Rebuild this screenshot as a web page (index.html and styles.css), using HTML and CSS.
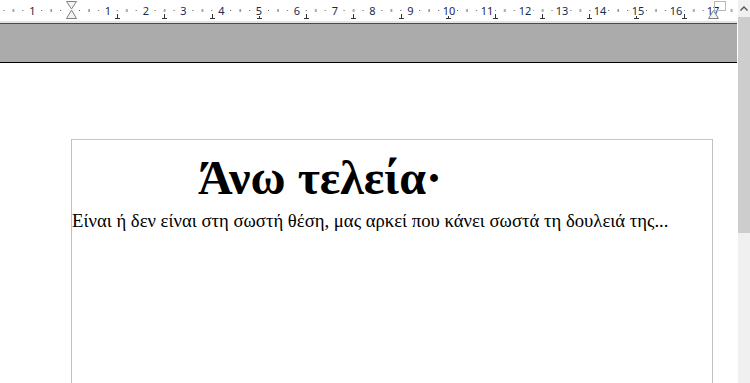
FILE: index.html
```html
<!DOCTYPE html>
<html lang="el">
<head>
<meta charset="utf-8">
<title>Άνω τελεία</title>
<link rel="stylesheet" href="styles.css">
</head>
<body>
<div class="window">
  <div class="main">
    <div class="ruler">
      <svg class="ruler-svg" width="737" height="21" viewBox="0 0 737 21" xmlns="http://www.w3.org/2000/svg">
        <defs>
          <pattern id="cm" x="-5.6" y="0" width="37.8" height="21" patternUnits="userSpaceOnUse">
            <rect x="9" y="10" width="1" height="1" fill="#555"/>
            <rect x="18.5" y="9" width="1" height="3" fill="#555"/>
            <rect x="28" y="10" width="1" height="1" fill="#555"/>
          </pattern>
        </defs>
        <rect x="0" y="0" width="737" height="21" fill="url(#cm)"/>
        <g class="tabs" stroke="#333" stroke-width="1" fill="none">
          <path d="M117.5 14v5M115 18.5h5"/>
          <path d="M164.5 14v5M162 18.5h5"/>
          <path d="M212.5 14v5M210 18.5h5"/>
          <path d="M259.5 14v5M257 18.5h5"/>
          <path d="M306.5 14v5M304 18.5h5"/>
          <path d="M353.5 14v5M351 18.5h5"/>
          <path d="M401.5 14v5M399 18.5h5"/>
          <path d="M448.5 14v5M446 18.5h5"/>
          <path d="M495.5 14v5M493 18.5h5"/>
          <path d="M542.5 14v5M540 18.5h5"/>
          <path d="M589.5 14v5M587 18.5h5"/>
          <path d="M636.5 14v5M634 18.5h5"/>
          <path d="M684.5 14v5M682 18.5h5"/>
        </g>
        <g class="nums" text-anchor="middle">
          <rect x="28" y="4" width="9" height="12" fill="#fff"/>
          <text x="32.5" y="15">1</text>
          <rect x="103" y="4" width="10" height="12" fill="#fff"/>
          <text x="108" y="15">1</text>
          <rect x="141" y="4" width="10" height="12" fill="#fff"/>
          <text x="146" y="15">2</text>
          <rect x="178" y="4" width="10" height="12" fill="#fff"/>
          <text x="183.5" y="15">3</text>
          <rect x="216" y="4" width="10" height="12" fill="#fff"/>
          <text x="221.5" y="15">4</text>
          <rect x="254" y="4" width="10" height="12" fill="#fff"/>
          <text x="259" y="15">5</text>
          <rect x="292" y="4" width="10" height="12" fill="#fff"/>
          <text x="297" y="15">6</text>
          <rect x="330" y="4" width="10" height="12" fill="#fff"/>
          <text x="335" y="15">7</text>
          <rect x="367" y="4" width="10" height="12" fill="#fff"/>
          <text x="372.5" y="15">8</text>
          <rect x="405" y="4" width="10" height="12" fill="#fff"/>
          <text x="410.5" y="15">9</text>
          <rect x="441" y="4" width="16" height="12" fill="#fff"/>
          <text x="449" y="15">10</text>
          <rect x="479" y="4" width="16" height="12" fill="#fff"/>
          <text x="487" y="15">11</text>
          <rect x="517" y="4" width="16" height="12" fill="#fff"/>
          <text x="525" y="15">12</text>
          <rect x="554" y="4" width="16" height="12" fill="#fff"/>
          <text x="562" y="15">13</text>
          <rect x="592" y="4" width="16" height="12" fill="#fff"/>
          <text x="600" y="15">14</text>
          <rect x="630" y="4" width="16" height="12" fill="#fff"/>
          <text x="638" y="15">15</text>
          <rect x="668" y="4" width="16" height="12" fill="#fff"/>
          <text x="676" y="15">16</text>
          <rect x="705" y="4" width="16" height="12" fill="#fff"/>
          <text x="713" y="15">17</text>
        </g>
        <g class="markers" stroke="#808080" stroke-width="1" fill="#f4f4f4">
          <path d="M66.5 1.5h10l-5 7.5z"/>
          <path d="M71.5 10l5 8.5h-10z"/>
          <rect x="714.5" y="1.5" width="11" height="9" fill="none" stroke="#b8b8b8"/>
          <path d="M713.5 10.5l5 8h-10z"/>
        </g>
      </svg>
    </div>
    <div class="band"></div>
    <div class="doc">
      <div class="page">
        <h1 class="title">Άνω τελεία·</h1>
        <p class="body-text">Είναι ή δεν είναι στη σωστή θέση, μας αρκεί που κάνει σωστά τη δουλειά της...</p>
      </div>
    </div>
  </div>
  <div class="scrollbar">
    <div class="arrow">
      <svg width="12" height="17" viewBox="0 0 12 17" xmlns="http://www.w3.org/2000/svg">
        <path d="M2.5 10.5l3.5-3.5 3.5 3.5" fill="none" stroke="#555" stroke-width="1.4"/>
      </svg>
    </div>
    <div class="thumb"></div>
    <div class="track"></div>
  </div>
</div>
</body>
</html>
```

FILE: styles.css
```css
html, body {
  margin: 0;
  padding: 0;
  width: 750px;
  height: 383px;
  overflow: hidden;
  background: #fff;
}

.window {
  display: flex;
  width: 750px;
  height: 383px;
}

.main {
  width: 737px;
  display: flex;
  flex-direction: column;
  margin-right: 1px;
}

.ruler {
  height: 21px;
  background: #fff;
  border-bottom: 2px solid #e4e4e4;
  position: relative;
}

.ruler-svg {
  display: block;
}

.nums text {
  font-family: "Noto Sans", "Liberation Sans", sans-serif;
  font-size: 11px;
  fill: #1c2a4a;
}

.band {
  height: 38px;
  background: #ababab;
  border-top: 1px solid #4a4a4a;
  border-bottom: 1px solid #000;
}

.doc {
  flex: 1;
  background: #fff;
  padding-top: 76px;
  padding-left: 71px;
  overflow: hidden;
}

.page {
  width: 642px;
  height: 400px;
  border-top: 1px solid #c6c6c6;
  border-left: 1px solid #c0c0c0;
  border-right: 1px solid #c0c0c0;
  box-sizing: border-box;
  font-family: "Liberation Serif", "DejaVu Serif", serif;
  color: #000;
}

.title {
  margin: 0;
  padding: 10px 0 0 126px;
  font-size: 48px;
  line-height: 55px;
  font-weight: bold;
}

.body-text {
  margin: 5px 0 0 0;
  font-size: 18.7px;
  line-height: 22px;
  white-space: nowrap;
}

.scrollbar {
  width: 12px;
  display: flex;
  flex-direction: column;
  background: #f0f0f0;
}

.arrow {
  height: 17px;
  background: #f0f0f0;
}

.arrow svg {
  display: block;
}

.thumb {
  height: 216px;
  background: #cdcdcd;
}

.track {
  flex: 1;
  background: #f0f0f0;
}
```
